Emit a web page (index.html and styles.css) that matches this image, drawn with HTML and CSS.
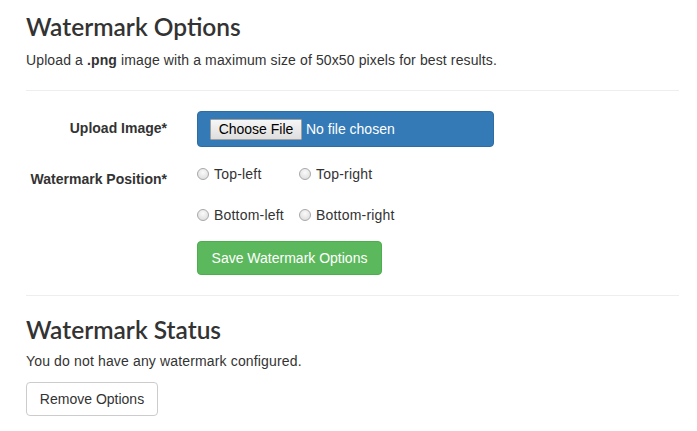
FILE: index.html
```html
<!DOCTYPE html>
<html>
<head>
<meta charset="utf-8">
<link rel="stylesheet" href="styles.css">
</head>
<body>
<div class="container">
  <h2 class="title">Watermark Options</h2>
  <p class="lead-text">Upload a <b>.png</b> image with a maximum size of 50x50 pixels for best results.</p>
  <hr class="sep">
  <form class="form">
    <div class="row row-upload">
      <div class="label-col">Upload Image*</div>
      <div class="field-col">
        <div class="file-box">
          <span class="file-btn">Choose File</span>
          <span class="file-name">No file chosen</span>
        </div>
      </div>
    </div>
    <div class="row row-position">
      <div class="label-col label-pos">Watermark Position*</div>
      <div class="field-col">
        <div class="radio-grid">
          <label class="radio"><input type="radio" name="pos"><span>Top-left</span></label>
          <label class="radio"><input type="radio" name="pos"><span>Top-right</span></label>
          <label class="radio"><input type="radio" name="pos"><span>Bottom-left</span></label>
          <label class="radio"><input type="radio" name="pos"><span>Bottom-right</span></label>
        </div>
        <button type="button" class="btn btn-success">Save Watermark Options</button>
      </div>
    </div>
  </form>
  <hr class="sep sep2">
  <h2 class="title title2">Watermark Status</h2>
  <p class="status-text">You do not have any watermark configured.</p>
  <button type="button" class="btn btn-default">Remove Options</button>
</div>
</body>
</html>
```
FILE: styles.css
```css
* { box-sizing: border-box; }
html, body { margin: 0; padding: 0; background: #fff; }
body {
  font-family: "Liberation Sans", Arial, sans-serif;
  font-size: 14px;
  line-height: 20px;
  color: #333;
}
.container {
  width: 697px;
  padding: 0 18px 0 26px;
}
.title {
  font-family: Lato, "Liberation Sans", sans-serif;
  font-weight: 600;
  font-size: 24.5px;
  line-height: 28px;
  margin: 13px 0 0 0;
  color: #333;
}
.lead-text {
  margin: 9px 0 0 0;
  line-height: 20px;
  letter-spacing: 0.12px;
}
.sep {
  border: 0;
  border-top: 1px solid #eee;
  margin: 20px 0 0 0;
  height: 0;
}
.form { margin-top: 20px; }
.row { display: flex; }
.label-col {
  flex: none;
  width: 171px;
  margin-left: -15px;
  margin-right: 15px;
  padding-right: 15px;
  text-align: right;
  font-weight: bold;
}
.row-upload .label-col { padding-top: 7px; }
.file-box {
  width: 297px;
  height: 36px;
  background: #337ab7;
  border: 1px solid #2e6da4;
  border-radius: 4px;
  display: flex;
  align-items: center;
  padding-left: 12px;
}
.file-btn {
  display: inline-block;
  width: 92px;
  height: 21px;
  line-height: 19px;
  text-align: center;
  font-size: 14px;
  color: #000;
  background: linear-gradient(#f6f6f6, #dedede);
  border: 1px solid #a0a0a0;
  border-radius: 1px;
}
.file-name {
  color: #fff;
  font-size: 14px;
  margin-left: 4px;
}
.row-position { margin-top: 14px; }
.label-pos { padding-top: 8px; }
.radio-grid {
  display: grid;
  grid-template-columns: 102px auto;
  row-gap: 21px;
  padding-top: 3px;
}
.radio {
  display: flex;
  align-items: center;
  line-height: 20px;
  letter-spacing: 0.2px;
}
.radio input {
  appearance: none;
  -webkit-appearance: none;
  width: 12px;
  height: 12px;
  margin: 0 5px 0 0;
  border-radius: 50%;
  border: 1px solid #a8a8a8;
  background: radial-gradient(circle at 50% 35%, #fafafa, #d8d8d8);
}
.btn {
  font-family: "Liberation Sans", Arial, sans-serif;
  font-size: 14px;
  border-radius: 4px;
  cursor: pointer;
  display: block;
}
.btn-success {
  margin-top: 16px;
  width: 185px;
  height: 34px;
  color: #fff;
  background: #5cb85c;
  border: 1px solid #4cae4c;
  padding: 0;
}
.sep2 { margin-top: 20px; }
.title2 { margin-top: 20px; }
.status-text { margin: 7px 0 0 0; letter-spacing: 0.15px; }
.btn-default {
  margin-top: 11px;
  width: 132px;
  height: 34px;
  color: #333;
  background: #fff;
  border: 1px solid #ccc;
  padding: 0;
}
```
